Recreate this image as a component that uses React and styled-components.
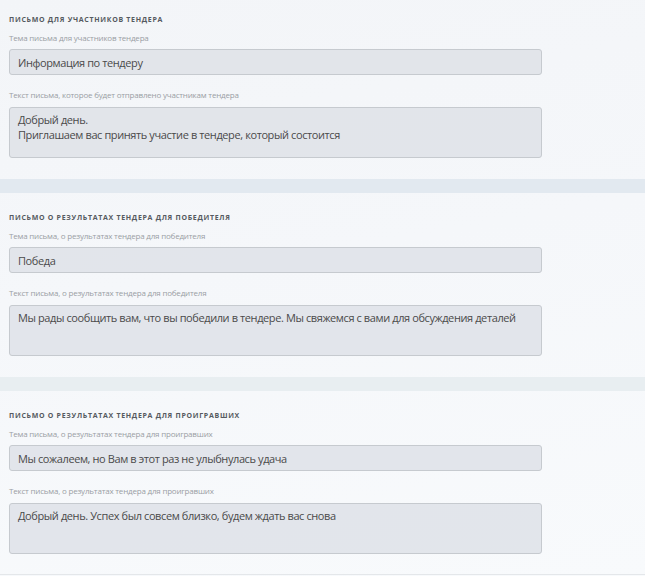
import React from 'react';
import styled, {createGlobalStyle} from 'styled-components'

const GlobalStyle = createGlobalStyle`
  html, body {
    margin: 0;
    padding: 0;
  }
  body {
    font-family: "Open Sans", "Liberation Sans", sans-serif;
    background: linear-gradient(170deg, #f3f5f8 0%, #f5f7fa 45%, #f8fafc 100%);
    min-height: 576px;
    overflow: hidden;
  }
`

const Page = styled.div`
  display: flex;
  flex-direction: column;
  margin-top: -5px;
`

const Section = styled.section`
  display: flex;
  flex-direction: column;
  height: 184px;
  box-sizing: border-box;
  padding: 19px 0 0 9px;
  border-bottom: ${p => p.last ? '1px solid #e4e7ea' : 'none'};
`

const Band = styled.div`
  height: 14px;
  background: ${p => p.tone};
`

const Title = styled.h3`
  margin: 0;
  font-size: 7px;
  line-height: 12px;
  font-weight: 700;
  letter-spacing: 0.7px;
  text-transform: uppercase;
  color: #555a60;
`

const Label = styled.label`
  display: block;
  margin: ${p => p.gap}px 0 ${p => p.after}px;
  font-size: 8px;
  line-height: 12px;
  letter-spacing: -0.2px;
  color: #9a9ea4;
`

const Field = styled.input`
  box-sizing: border-box;
  width: 533px;
  height: 26px;
  margin: 0;
  padding: 0 8px;
  border: 1px solid #c6cacf;
  border-radius: 3px;
  background: rgba(222, 226, 231, 0.85);
  font-family: "Open Sans", "Liberation Sans", sans-serif;
  font-size: 11px;
  letter-spacing: -0.4px;
  color: #4a4a4a;
  outline: none;
`

const Area = styled.textarea`
  box-sizing: border-box;
  display: block;
  width: 533px;
  height: 51px;
  margin: 0;
  padding: 4px 8px;
  border: 1px solid #c6cacf;
  border-radius: 3px;
  background: rgba(222, 226, 231, 0.85);
  font-family: "Open Sans", "Liberation Sans", sans-serif;
  font-size: 11px;
  letter-spacing: -0.4px;
  line-height: 15px;
  color: #4a4a4a;
  resize: none;
  outline: none;
  overflow: hidden;
`

const letters = [
  {
    title: 'Письмо для участников тендера',
    subjectLabel: 'Тема письма для участников тендера',
    subject: 'Информация по тендеру',
    bodyLabel: 'Текст письма, которое будет отправлено участникам тендера',
    body: 'Добрый день.\nПриглашаем вас принять участие в тендере, который состоится',
  },
  {
    title: 'Письмо о результатах тендера для победителя',
    subjectLabel: 'Тема письма, о результатах тендера для победителя',
    subject: 'Победа',
    bodyLabel: 'Текст письма, о результатах тендера для победителя',
    body: 'Мы рады сообщить вам, что вы победили в тендере. Мы свяжемся с вами для обсуждения деталей',
  },
  {
    title: 'Письмо о результатах тендера для проигравших',
    subjectLabel: 'Тема письма, о результатах тендера для проигравших',
    subject: 'Мы сожалеем, но Вам в этот раз не улыбнулась удача',
    bodyLabel: 'Текст письма, о результатах тендера для проигравших',
    body: 'Добрый день. Успех был совсем близко, будем ждать вас снова',
  },
]

const bandTones = ['#e2e9f0', '#e8eef1']

export default function App() {
  return (
    <Page>
      <GlobalStyle />
      {letters.map((l, i) => (
        <React.Fragment key={i}>
          <Section last={i === letters.length - 1}>
            <Title>{l.title}</Title>
            <Label gap={6} after={5}>{l.subjectLabel}</Label>
            <Field readOnly value={l.subject} />
            <Label gap={14} after={6}>{l.bodyLabel}</Label>
            <Area readOnly value={l.body} />
          </Section>
          {i < letters.length - 1 && <Band tone={bandTones[i]} />}
        </React.Fragment>
      ))}
    </Page>
  )
}
